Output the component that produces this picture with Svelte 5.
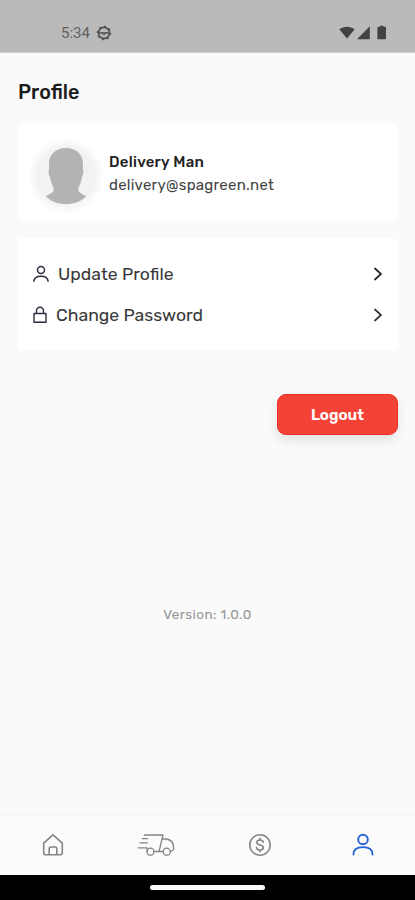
<script>
    let active = 'profile';
    const user = { name: 'Delivery Man', email: 'delivery@spagreen.net' };
    const tabs = ['home', 'deliveries', 'payments', 'profile'];
</script>

<div class="screen">
    <header class="statusBar">
        <span class="time">5:34</span>
        <svg class="gear" width="16" height="16" viewBox="0 0 16 16" fill="none" stroke="#505050">
            <circle cx="8" cy="8" r="5.6" stroke-width="1.7" />
            <circle cx="8" cy="8" r="6.7" stroke-width="1.2" stroke-dasharray="1.8 3.46" />
            <path d="M2.5 7.9h11" stroke-width="1.5" />
            <path d="M6.3 8.5h3.4L8 10.5z" stroke-width="0.8" />
        </svg>
        <svg class="signals" width="48" height="16" viewBox="0 0 48 16" fill="#424242">
            <path d="M.3 4.3C4.8.8 11.2.8 15.7 4.3L8 13.4z" />
            <path d="M30.8 1.2v13H18z" />
            <path d="M39.300 1.700H41V.8h3.400v.9h1.700q.9 0 .9.9v10.800q0 .9-.9.9h-6.800q-.9 0-.9-.9V2.600q0-.9.9-.9z" />
        </svg>
    </header>

    <main>
        <h1>Profile</h1>

        <section class="card userCard">
            <div class="avatar">
                <svg width="76" height="76" viewBox="0 0 76 76">
                    <path fill="#b3b3b3" d="M38 10c10 0 17 6.500 17 15.500v6.200c.7.8.5 4.200-1 7-.8 5-2 8.300-3.600 10.800v3.500c1.500 2.400 4.800 3.500 7.800 5C53.500 63.500 46.200 66 38 66s-15.500-2.500-20.200-8c3-1.500 6.300-2.600 7.800-5v-3.500c-1.600-2.500-2.800-5.800-3.600-10.800-1.500-2.800-1.700-6.200-1-7v-6.200C21 16.500 28 10 38 10z" />
                </svg>
            </div>
            <div class="details">
                <h2>{user.name}</h2>
                <p>{user.email}</p>
            </div>
        </section>

        <section class="card menu">
            <div class="item">
                <svg width="18" height="18" viewBox="0 0 18 18" fill="none" stroke="#2c2c40" stroke-width="1.5" stroke-linecap="round">
                    <circle cx="9" cy="5" r="3.5" />
                    <path d="M1.9 16.3c.2-3.3 3-5 7.1-5s6.9 1.7 7.1 5" />
                </svg>
                <span>Update Profile</span>
                <svg class="chevron" width="10" height="16" viewBox="0 0 10 16" fill="none" stroke="#222" stroke-width="1.7" stroke-linecap="round">
                    <path d="M2 2.5 8 8l-6 5.5" />
                </svg>
            </div>
            <div class="item">
                <svg width="16" height="18" viewBox="0 0 16 18" fill="none" stroke="#2c2c40" stroke-width="1.4" stroke-linejoin="round">
                    <path d="M2 7.5h12v8.8H2zM4.500 7.500V4.800a3.500 3.500 0 0 1 7 0v2.700" />
                </svg>
                <span>Change Password</span>
                <svg class="chevron" width="10" height="16" viewBox="0 0 10 16" fill="none" stroke="#333" stroke-width="1.7" stroke-linecap="round">
                    <path d="M2 2.5 8 8l-6 5.5" />
                </svg>
            </div>
        </section>

        <button class="logout">Logout</button>
        <p class="version">Version: 1.0.0</p>
    </main>

    <nav>
        {#each tabs as tab (tab)}
        <div class="tab" class:active={tab === active} on:click={() => (active = tab)}>
            {#if tab === 'home'}
                <svg width="22" height="24" viewBox="0 0 22 24">
                    <path d="M1.7 10.2 11 1.8l9.3 8.4v9.600q0 2-2 2H3.700q-2 0-2-2zM7.200 21.600v-6q0-1.600 1.600-1.600h4.400q1.600 0 1.600 1.600v6" />
                </svg>
            {:else if tab === 'deliveries'}
                <svg class="truck" width="38" height="24" viewBox="0 0 38 24">
                    <path d="M7.500 2H26l-4 16.500M25.200 6h4.300c4.500.8 7 3.800 7 8v2.700l-3 1.800M17 18.500h8.800M5.300 5.700h5.200M3 9.800h7.500M1.200 14.800h8.800v3.700" />
                    <circle cx="13.500" cy="18.700" r="3.500" />
                    <circle cx="29.700" cy="18.700" r="3.500" />
                </svg>
            {:else if tab === 'payments'}
                <svg width="24" height="24" viewBox="0 0 24 24">
                    <circle cx="12" cy="12" r="10.200" />
                    <path d="M15.300 9.200c-.2-1.500-1.500-2.200-3.300-2.200s-3.200.9-3.200 2.400c0 3.600 6.500 1.500 6.500 5.100 0 1.600-1.300 2.500-3.300 2.500s-3.300-.9-3.500-2.400M12 5.300V7M12 17v1.700" />
                </svg>
            {:else}
                <svg width="24" height="24" viewBox="0 0 24 24">
                    <circle cx="12" cy="6.500" r="4.800" />
                    <path d="M2.500 21.500c0-4.800 3.700-7.400 9.500-7.400s9.500 2.600 9.500 7.400" />
                </svg>
            {/if}
        </div>
        {/each}
    </nav>
    <footer><div class="handle"></div></footer>
</div>

<style>
    :global(body) {
        background: #fafafa;
    }

    .screen {
        display: flex;
        flex-direction: column;
        height: 900px;
        width: 415px;
        overflow: hidden;
        background: #fafafa;
        font-family: Rubik, Roboto, sans-serif;
        color: #222;
    }

    h1, h2, p {
        margin: 0;
    }

    svg {
        display: block;
        flex: none;
    }

    .statusBar {
        display: flex;
        align-items: center;
        box-sizing: border-box;
        height: 53px;
        padding: 13px 28px 0 61px;
        background: #bababa;
        border-bottom: 1px solid #d0d0d0;
    }

    .time {
        width: 35px;
        font-family: Roboto, sans-serif;
        font-size: 15px;
        color: #606060;
    }

    .signals {
        margin-left: auto;
    }

    main {
        flex: 1;
        display: flex;
        flex-direction: column;
        padding: 0 17px;
    }

    h1 {
        margin: 27px 0 20px 1px;
        font-size: 19.8px;
        line-height: 24px;
        font-weight: 500;
        color: #1c1c1c;
    }

    .card {
        background: #fff;
        border-radius: 5px;
        box-shadow: 0 0 3px rgba(0, 0, 0, 0.012);
    }

    .userCard {
        display: flex;
        align-items: center;
        height: 97px;
        padding-left: 11px;
    }

    .avatar {
        margin-top: 6px;
        border-radius: 50%;
        background: radial-gradient(closest-side, #f2f2f2 74%, #fff 100%);
    }

    .details {
        margin-left: 5px;
        padding-top: 3px;
    }

    h2 {
        font-size: 15px;
        line-height: 23px;
        font-weight: 500;
        letter-spacing: 0.25px;
    }

    .details p {
        font-size: 15px;
        line-height: 23px;
        letter-spacing: 0.25px;
        color: #444;
    }

    .menu {
        display: flex;
        flex-direction: column;
        box-sizing: border-box;
        height: 113px;
        margin-top: 17px;
        padding: 15px 15px 0;
    }

    .item {
        display: flex;
        align-items: center;
        height: 41.5px;
        font-size: 17.6px;
        color: #383838;
    }

    .item span {
        margin-left: 8px;
    }

    .chevron {
        margin-left: auto;
    }

    .logout {
        align-self: flex-end;
        width: 121px;
        height: 41px;
        margin-top: 43px;
        padding: 0;
        border: 1px solid #ea2e20;
        border-radius: 9px;
        background: #f44336;
        box-shadow: 0 5px 12px rgba(0, 0, 0, 0.1);
        font-family: inherit;
        font-size: 15.2px;
        font-weight: 600;
        color: #fff;
    }

    .version {
        margin-top: 169px;
        text-align: center;
        font-size: 13.5px;
        line-height: 20px;
        letter-spacing: 0.4px;
        color: #969696;
    }

    nav {
        display: grid;
        grid-template-columns: repeat(4, 1fr);
        box-sizing: border-box;
        height: 61px;
        padding-left: 1px;
        border-top: 1px solid #f2f2f2;
        background: #fbfbfb;
    }

    .tab {
        display: flex;
        align-items: center;
        justify-content: center;
        color: #858585;
    }

    .tab svg {
        fill: none;
        stroke: currentColor;
        stroke-width: 1.6;
        stroke-linecap: round;
        stroke-linejoin: round;
    }

    .tab .truck {
        stroke-width: 1.3;
    }

    .tab.active {
        color: #2462d8;
    }

    .tab.active svg {
        stroke-width: 1.9;
    }

    footer {
        display: flex;
        justify-content: center;
        box-sizing: border-box;
        height: 25px;
        padding-top: 10px;
        background: #000;
    }

    .handle {
        width: 115px;
        height: 5px;
        border-radius: 3px;
        background: #f8f8f8;
    }
</style>
